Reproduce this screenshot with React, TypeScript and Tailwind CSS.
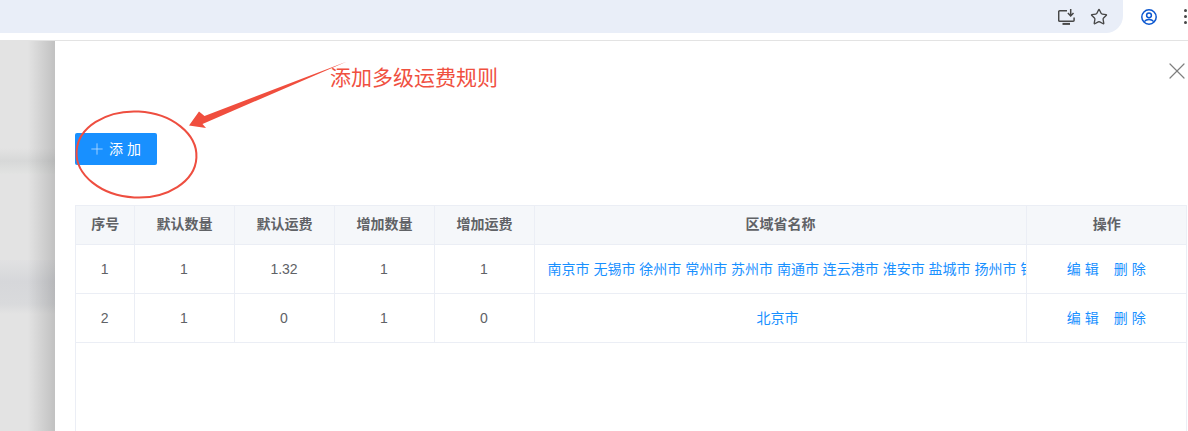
import React from "react";
import { Plus, Star, X } from "lucide-react";

const columns = [
  { title: "序号", width: "w-[58px]" },
  { title: "默认数量", width: "w-[100px]" },
  { title: "默认运费", width: "w-[100px]" },
  { title: "增加数量", width: "w-[100px]" },
  { title: "增加运费", width: "w-[100px]" },
  { title: "区域省名称", width: "w-[492px]" },
  { title: "操作", width: "w-[160px]" },
];

const rows = [
  {
    no: "1",
    cells: ["1", "1.32", "1", "1"],
    region: "南京市 无锡市 徐州市 常州市 苏州市 南通市 连云港市 淮安市 盐城市 扬州市 镇江市",
  },
  { no: "2", cells: ["1", "0", "1", "0"], region: "北京市" },
];

const BrowserBar = () => (
  <header className="h-[41px] shrink-0 flex border-b border-[#e3e3e3] bg-white">
    <div className="w-[1123px] h-[33px] flex items-center justify-end gap-[15px] pr-[15px] rounded-br-[17px] bg-[#e9eef8] text-[#474747]">
      {/* install app icon */}
      <svg width="17" height="16" viewBox="0 0 17 16" fill="none" stroke="currentColor" strokeWidth="1.5">
        <path d="M9 1.7H1.7a1 1 0 0 0-1 1v8.6a1 1 0 0 0 1 1h13.4a1 1 0 0 0 1-1V8.5" />
        <path d="M4.5 14.9h7.5" strokeWidth="2" />
        <path d="M12.7 0v6.6M9.9 4l2.8 2.9L15.5 4" />
      </svg>
      <Star size={18} strokeWidth={1.8} />
    </div>
    <div className="flex-1 flex items-center h-[33px] pl-[18px] gap-[27px]">
      <svg width="16" height="16" viewBox="0 0 16 16" fill="none" stroke="#0b57d0" strokeWidth="1.5">
        <circle cx="8" cy="8" r="7.2" />
        <circle cx="8" cy="6.3" r="2.4" />
        <path d="M3.3 12.6c1.2-1.5 3-2.1 4.7-2.1s3.5.6 4.7 2.1" />
      </svg>
      <div className="flex flex-col gap-[3px]">
        <span className="w-[3px] h-[3px] rounded-full bg-[#474747]" />
        <span className="w-[3px] h-[3px] rounded-full bg-[#474747]" />
        <span className="w-[3px] h-[3px] rounded-full bg-[#474747]" />
      </div>
    </div>
  </header>
);

const BlurredPage = () => (
  <aside className="w-[55px] shrink-0 relative overflow-hidden flex flex-col bg-[#e3e3e3]">
    <div className="h-[107px] shrink-0" />
    <div className="h-[26px] shrink-0 bg-gradient-to-b from-[#e3e3e3] via-[#d7d8d8] to-[#e2e3e2]" />
    <div className="h-[86px] shrink-0" />
    <div className="h-[44px] shrink-0 bg-gradient-to-b from-[#e1e1e2] via-[#d6d7da] to-[#d9dadc]" />
    <div className="h-[10px] shrink-0 bg-gradient-to-b from-[#d9dadc] to-[#e3e3e3]" />
    {/* drawer shadow falling on the page */}
    <div className="absolute inset-0 bg-gradient-to-r from-transparent via-transparent to-black/15" />
  </aside>
);

const Annotation = () => (
  <>
    <svg className="absolute left-0 top-0 pointer-events-none" width="400" height="200" viewBox="0 41 400 200">
      <path d="M347 61.5 L204.5 116 L199 111.5 L189 125.5 L206 128 L202.5 124 Z" fill="#f04e3e" />
      <ellipse cx="136.5" cy="154.5" rx="60" ry="43" fill="none" stroke="#ee4e40" strokeWidth="2" transform="rotate(3 136.5 154.5)" />
    </svg>
    <span className="absolute left-[330px] top-[22px] text-[21px] leading-[30px] text-[#f0503f] whitespace-nowrap">
      添加多级运费规则
    </span>
  </>
);

export default function App() {
  return (
    <div className="relative w-[1188px] h-[431px] overflow-hidden flex flex-col bg-white font-['Liberation_Sans','Noto_Sans_CJK_SC',sans-serif]">
      <BrowserBar />
      <div className="flex flex-1 min-h-0">
        <BlurredPage />
        <main className="relative flex-1 flex flex-col pl-[20px] pr-px pt-[92px]">
          <X className="absolute right-[-3px] top-[16px] text-[#7f7f7f]" size={28} strokeWidth={1.05} />
          <button className="w-[82px] h-[32px] flex items-center gap-[3px] pl-[13px] rounded-[2px] bg-[#1890ff] text-[14px] text-white">
            <Plus size={18} strokeWidth={1.1} className="opacity-70" />
            <span>添 加</span>
          </button>

          <div className="mt-[40px] flex-1 border-x border-t border-[#ebeef5]">
            <table className="table-fixed w-[1110px] border-collapse text-[14px] text-[#606266]">
              <thead>
                <tr className="h-[38px] bg-[#f5f7fa] border-b border-[#ebeef5]">
                  {columns.map((col) => (
                    <th key={col.title} className={`${col.width} pl-px border-r border-[#ebeef5] last:border-r-0 font-bold text-center`}>
                      {col.title}
                    </th>
                  ))}
                </tr>
              </thead>
              <tbody>
                {rows.map((row) => (
                  <tr key={row.no} className="h-[49px] border-b border-[#ebeef5] text-center">
                    <td className="pt-px border-r border-[#ebeef5]">{row.no}</td>
                    {row.cells.map((cell, i) => (
                      <td key={i} className="pt-px border-r border-[#ebeef5]">
                        {cell}
                      </td>
                    ))}
                    <td className="pt-px border-r border-[#ebeef5] pl-[13px] text-[#1890ff]">
                      <div className="whitespace-nowrap overflow-hidden pr-[18px]">{row.region}</div>
                    </td>
                    <td className="pt-px text-[#1890ff]">
                      <span>编 辑</span>
                      <span className="ml-[15px]">删 除</span>
                    </td>
                  </tr>
                ))}
              </tbody>
            </table>
          </div>
        </main>
      </div>
      <div className="absolute inset-0 pointer-events-none">
        <div className="relative mt-[41px]">
          <Annotation />
        </div>
      </div>
    </div>
  );
}
